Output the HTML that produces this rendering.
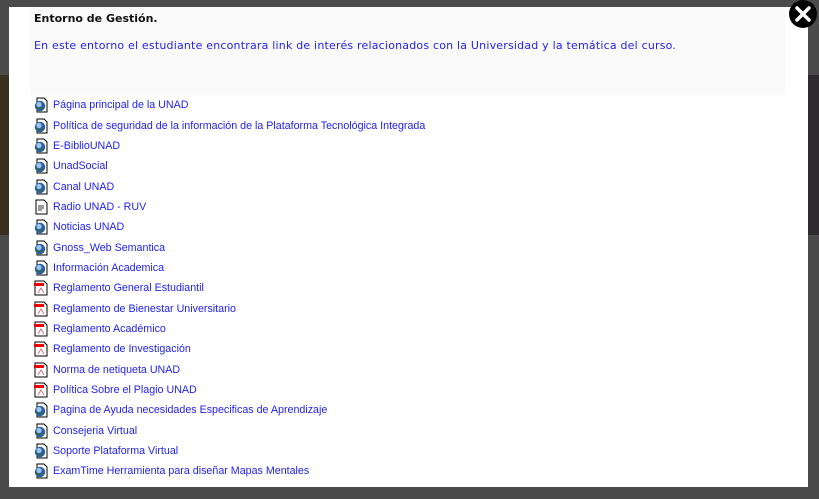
<!DOCTYPE html>
<html><head><meta charset="utf-8"><style>
html,body{margin:0;padding:0;width:819px;height:499px;overflow:hidden;background:#4b4b4b;font-family:"Liberation Sans",Arial,sans-serif}
.bgl{position:absolute;left:0;top:75px;width:10px;height:160px;background:#3a3020}
.bgr{position:absolute;left:808px;top:75px;width:11px;height:160px;background:#2e2a30}
.modal{position:absolute;left:9px;top:7px;width:799px;height:480px;background:#fff}
.head{position:absolute;left:21px;top:0;width:755px;height:88px;background:#fafafa}
.body{position:absolute;left:21px;top:88px;width:755px;height:386px;background:#fff}
.t1{position:absolute;left:25px;top:5px;font:bold 11px "DejaVu Sans",Verdana,sans-serif;color:#111}
.t2{position:absolute;left:25px;top:32px;font:11px "DejaVu Sans",Verdana,sans-serif;color:#2323f0;letter-spacing:0.2px}
ul{list-style:none;margin:0;padding:0;position:absolute;left:24px;top:88px}
li{height:20.35px;display:flex;align-items:center;font-size:10.7px;color:#1f1ff0}
li svg{width:16px;height:16px;margin-right:4px;flex:none}
.x{position:absolute;left:788px;top:0;width:30px;height:30px}
</style></head><body>
<div class="bgl"></div><div class="bgr"></div>
<div class="modal">
<div class="head"></div><div class="body"></div>
<div class="t1">Entorno de Gestión.</div>
<div class="t2">En este entorno el estudiante encontrara link de interés relacionados con la Universidad y la temática del curso.</div>
<svg width="0" height="0" style="position:absolute"><defs>
<g id="g"><path d="M4 1h7l3 3v11H4z" fill="#fff" stroke="#000"/><circle cx="7" cy="9" r="5.2" fill="#2a5fa8"/><circle cx="6" cy="7.5" r="2.6" fill="#9fc4e8"/><path d="M3 10c2 1 4 3 7 1" stroke="#3a6a2a" fill="none"/></g>
<g id="p"><path d="M2 1h9l3 3v11H2z" fill="#fff" stroke="#000"/><rect x="1" y="3" width="10" height="3" fill="#e00"/><path d="M5 13l3-5 3 5" stroke="#c77" fill="none"/></g>
<g id="d"><path d="M3 1h8l3 3v11H3z" fill="#fff" stroke="#000"/><path d="M5 7h6M5 9h6M5 11h4" stroke="#333"/></g>
</defs></svg>
<ul>
<li><svg><use href="#g"/></svg>Página principal de la UNAD</li>
<li><svg><use href="#g"/></svg>Política de seguridad de la información de la Plataforma Tecnológica Integrada</li>
<li><svg><use href="#g"/></svg>E-BiblioUNAD</li>
<li><svg><use href="#g"/></svg>UnadSocial</li>
<li><svg><use href="#g"/></svg>Canal UNAD</li>
<li><svg><use href="#d"/></svg>Radio UNAD - RUV</li>
<li><svg><use href="#g"/></svg>Noticias UNAD</li>
<li><svg><use href="#g"/></svg>Gnoss_Web Semantica</li>
<li><svg><use href="#g"/></svg>Información Academica</li>
<li><svg><use href="#p"/></svg>Reglamento General Estudiantil</li>
<li><svg><use href="#p"/></svg>Reglamento de Bienestar Universitario</li>
<li><svg><use href="#p"/></svg>Reglamento Académico</li>
<li><svg><use href="#p"/></svg>Reglamento de Investigación</li>
<li><svg><use href="#p"/></svg>Norma de netiqueta UNAD</li>
<li><svg><use href="#p"/></svg>Política Sobre el Plagio UNAD</li>
<li><svg><use href="#g"/></svg>Pagina de Ayuda necesidades Especificas de Aprendizaje</li>
<li><svg><use href="#g"/></svg>Consejeria Virtual</li>
<li><svg><use href="#g"/></svg>Soporte Plataforma Virtual</li>
<li><svg><use href="#g"/></svg>ExamTime Herramienta para diseñar Mapas Mentales</li>
</ul>
</div>
<svg class="x" viewBox="0 0 30 30"><circle cx="15" cy="14" r="14" fill="#000"/><path d="M9 8l12 12M21 8L9 20" stroke="#fff" stroke-width="3.5" stroke-linecap="round"/></svg>
</body></html>
